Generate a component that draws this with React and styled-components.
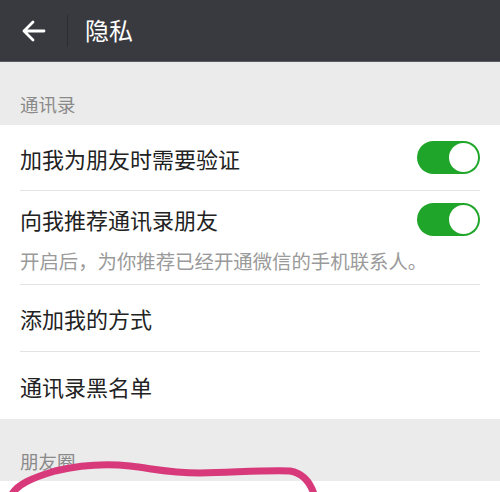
import React from "react";
import styled, { createGlobalStyle } from "styled-components";

const GlobalStyle = createGlobalStyle`
  html, body {
    margin: 0;
    padding: 0;
    background: #ebebeb;
  }
  body {
    font-family: "Noto Sans CJK SC", "Noto Sans", sans-serif;
    overflow: hidden;
  }
`;

const Page = styled.div`
  position: relative;
  width: 500px;
  height: 492px;
  overflow: hidden;
  background: #ebebeb;
`;

const Header = styled.div`
  height: 61px;
  background: #393a3f;
  border-bottom: 1px solid #5a5b60;
  display: flex;
  align-items: center;
`;

const BackButton = styled.div`
  width: 67px;
  height: 61px;
  display: flex;
  align-items: center;
  padding-left: 21px;
  box-sizing: border-box;
`;

const Divider = styled.div`
  width: 1px;
  height: 32px;
  background: #2c2d31;
`;

const Title = styled.div`
  margin-left: 17px;
  color: #fff;
  font-size: 24px;
  line-height: 30px;
  margin-top: -2px;
`;

const SectionLabel = styled.div`
  height: ${(p) => p.h}px;
  box-sizing: border-box;
  padding: 30px 20px 0;
  color: #8a8a8a;
  font-size: 18.5px;
  line-height: 24px;
`;

const Group = styled.div`
  background: #fff;
`;

const Row = styled.div`
  margin: 0 20px;
  border-bottom: ${(p) => (p.last ? "none" : "1px solid #e3e3e3")};
  display: flex;
  flex-direction: column;
`;

const RowMain = styled.div`
  height: ${(p) => p.h}px;
  display: flex;
  align-items: center;
  justify-content: space-between;
`;

const RowText = styled.div`
  color: #222;
  font-size: 22px;
  line-height: 28px;
`;

const RowSub = styled.div`
  color: #9a9a9a;
  font-size: 19.4px;
  line-height: 26px;
  padding: 1px 0 10px;
  white-space: nowrap;
`;

const Toggle = styled.div`
  width: 63px;
  height: 33px;
  border-radius: 17px;
  background: #1fa62a;
  box-sizing: border-box;
  padding: 2px;
  display: flex;
  justify-content: flex-end;
`;

const Knob = styled.div`
  width: 29px;
  height: 29px;
  border-radius: 50%;
  background: #fff;
`;

const Annotation = styled.svg`
  position: absolute;
  left: 0;
  top: 0;
  pointer-events: none;
`;

function Switch() {
  return (
    <Toggle>
      <Knob />
    </Toggle>
  );
}

export default function App() {
  return (
    <Page>
      <GlobalStyle />
      <Header>
        <BackButton>
          <svg width="25" height="22" viewBox="0 0 25 22">
            <path
              d="M23 11H3M12 2L3 11l9 9"
              fill="none"
              stroke="#fff"
              strokeWidth="2.8"
              strokeLinecap="round"
              strokeLinejoin="round"
            />
          </svg>
        </BackButton>
        <Divider />
        <Title>隐私</Title>
      </Header>

      <SectionLabel h={63}>通讯录</SectionLabel>
      <Group>
        <Row>
          <RowMain h={65}>
            <RowText>加我为朋友时需要验证</RowText>
            <Switch />
          </RowMain>
        </Row>
        <Row>
          <RowMain h={56}>
            <RowText>向我推荐通讯录朋友</RowText>
            <Switch />
          </RowMain>
          <RowSub>开启后，为你推荐已经开通微信的手机联系人。</RowSub>
        </Row>
        <Row>
          <RowMain h={66}>
            <RowText>添加我的方式</RowText>
          </RowMain>
        </Row>
        <Row last>
          <RowMain h={67}>
            <RowText>通讯录黑名单</RowText>
          </RowMain>
        </Row>
      </Group>

      <SectionLabel h={62}>朋友圈</SectionLabel>
      <Group>
        <Row last>
          <RowMain h={66} />
        </Row>
      </Group>

      <Annotation width="500" height="492" viewBox="0 0 500 492">
        <path
          d="M12 494 C18 484 32 478 55 471 C80 465 105 463 130 466 C155 469 170 473 200 473 C240 472 270 470 290 471 C302 473 310 482 314 494"
          fill="none"
          stroke="#d7397a"
          strokeWidth="7"
          strokeLinecap="round"
        />
      </Annotation>
    </Page>
  );
}
